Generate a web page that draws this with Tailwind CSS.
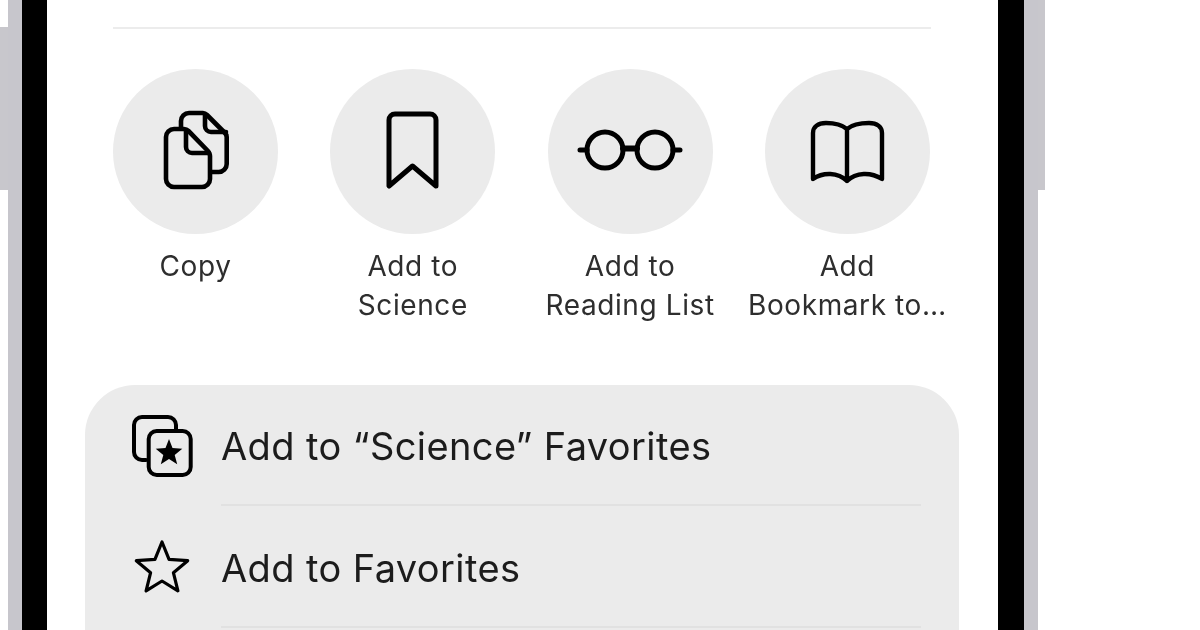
<!DOCTYPE html>
<html lang="en">
  <head>
    <meta charset="UTF-8" />
    <title>Share sheet</title>
    <script src="https://cdn.jsdelivr.net/npm/@tailwindcss/browser@4"></script>
  </head>
  <body class="bg-white">
    <div class="flex w-[1200px] h-[630px] overflow-hidden bg-white blur-[0.5px] font-['Inter',sans-serif]">
      <!-- phone edge, left -->
      <div class="w-[8px] h-[163px] mt-[27px] bg-[#c8c7cc]"></div>
      <div class="w-[14px] bg-[#c7c6cc]"></div>
      <div class="w-[25px] bg-black"></div>

      <!-- screen -->
      <div class="w-[951px] pt-[27px] bg-white">
        <div class="w-[818px] h-[2px] ml-[66px] bg-[#ececec]"></div>

        <!-- action circles -->
        <div class="flex gap-[52.3px] ml-[66px] mt-[40px] h-[256px] text-[28px] tracking-[0.6px] leading-[39px] text-center text-[#2e2e2e]">
          <div class="w-[165px] flex flex-col items-center">
            <div class="w-[165px] h-[165px] rounded-full bg-[#ebebeb]">
              <svg class="w-[165px] h-[165px]" viewBox="0 0 165 165" fill="none" stroke="#000" stroke-width="4.6" stroke-linejoin="round" stroke-linecap="round">
                <path d="M68 58V52a8 8 0 0 1 8-8H90q2 0 4 2L111 63q2.700 2.500 2.700 5V95a8 8 0 0 1-8 8H98" />
                <path d="M92 46V57a6 6 0 0 0 6 6H113" />
                <path d="M53 68a8 8 0 0 1 8-8H71q2.500 0 4.500 2L94 81q3 3 3 6V110a8 8 0 0 1-8 8H61a8 8 0 0 1-8-8Z" />
                <path d="M73 62V78a6 6 0 0 0 6 6H96" />
              </svg>
            </div>
            <div class="mt-[13px] whitespace-nowrap">Copy</div>
          </div>
          <div class="w-[165px] flex flex-col items-center">
            <div class="w-[165px] h-[165px] rounded-full bg-[#ebebeb]">
              <svg class="w-[165px] h-[165px]" viewBox="0 0 165 165" fill="none" stroke="#000" stroke-width="5" stroke-linejoin="round" stroke-linecap="round">
                <path d="M59 117V51a6 6 0 0 1 6-6H100a6 6 0 0 1 6 6V117L82.500 97Z" />
              </svg>
            </div>
            <div class="mt-[13px] whitespace-nowrap">Add to<br />Science</div>
          </div>
          <div class="w-[165px] flex flex-col items-center">
            <div class="w-[165px] h-[165px] rounded-full bg-[#ebebeb]">
              <svg class="w-[165px] h-[165px]" viewBox="0 0 165 165" fill="none" stroke="#000" stroke-width="5" stroke-linejoin="round" stroke-linecap="round">
                <circle cx="57" cy="81" r="18" />
                <circle cx="107" cy="81" r="18" />
                <path d="M75 79.500H89" stroke-width="6" />
                <path d="M32 81H39M125 81H132" />
              </svg>
            </div>
            <div class="mt-[13px] whitespace-nowrap">Add to<br />Reading List</div>
          </div>
          <div class="w-[165px] flex flex-col items-center">
            <div class="w-[165px] h-[165px] rounded-full bg-[#ebebeb]">
              <svg class="w-[165px] h-[165px]" viewBox="0 0 165 165" fill="none" stroke="#000" stroke-width="4.400" stroke-linejoin="round" stroke-linecap="round">
                <path d="M82 60C76 55 68 54 61 54C53 54 48 58 48 64V110C58 103 73 103 82 112C91 103 106 103 117 110V64C117 58 112 54 104 54C97 54 88 55 82 60V112" />
              </svg>
            </div>
            <div class="mt-[13px] whitespace-nowrap">Add<br />Bookmark to…</div>
          </div>
        </div>

        <!-- list panel -->
        <div class="w-[874px] h-[400px] ml-[38px] mt-[60px] rounded-t-[50px] bg-[#ebebeb] text-[38px] tracking-[0.4px] text-[#1c1c1c]">
          <div class="flex h-[121px]">
            <svg class="w-[136px] h-[119px] shrink-0" viewBox="0 0 136 119" fill="none" stroke="#000" stroke-width="4" stroke-linejoin="round" stroke-linecap="round">
              <path d="M61 75H57a8 8 0 0 1-8-8V40a8 8 0 0 1 8-8H83a8 8 0 0 1 8 8V44" />
              <rect x="63.700" y="46" width="42" height="44" rx="8" />
              <polygon points="84,54 87.500,63.100 97.300,63.700 89.700,69.900 92.200,79.300 84,74 75.800,79.300 78.300,69.900 70.700,63.700 80.500,63.100" fill="#000" stroke="none" />
            </svg>
            <div class="flex-1 mr-[38px] pt-[4px] flex items-center border-b-2 border-[#e1e1e1] whitespace-nowrap">Add to “Science” Favorites</div>
          </div>
          <div class="flex h-[122px]">
            <svg class="w-[136px] h-[120px] shrink-0" viewBox="0 0 136 120" fill="none" stroke="#000" stroke-width="3.200" stroke-linejoin="round">
              <polygon points="77,36 84.050,53.300 102.700,54.700 88.400,66.700 92.900,84.800 77,75 61.100,84.800 65.600,66.700 51.300,54.700 69.950,53.300" />
            </svg>
            <div class="flex-1 mr-[38px] pt-[4px] flex items-center border-b-2 border-[#e1e1e1] whitespace-nowrap">Add to Favorites</div>
          </div>
        </div>
      </div>

      <!-- phone edge, right -->
      <div class="w-[26px] bg-black"></div>
      <div class="w-[14px] bg-[#c7c6cc]"></div>
      <div class="w-[7px] h-[190px] bg-[#c8c7cc]"></div>
    </div>
  </body>
</html>
